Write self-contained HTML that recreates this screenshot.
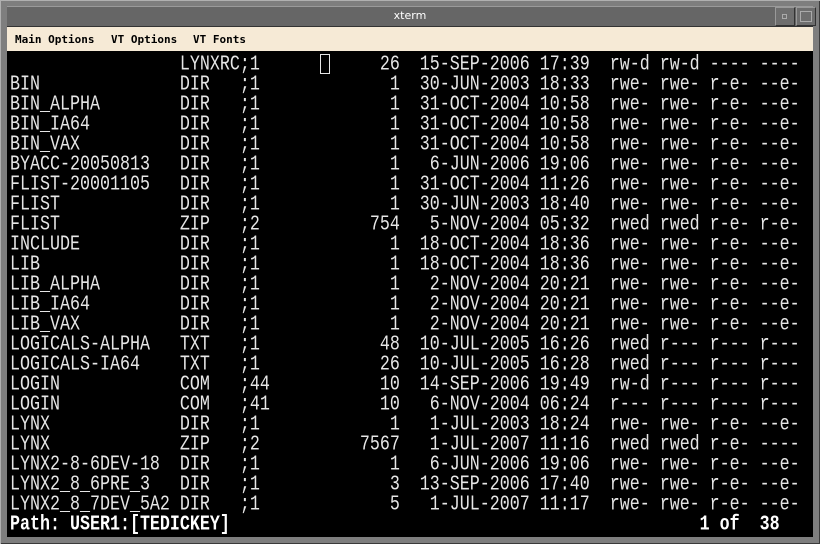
<!DOCTYPE html>
<html><head><style>
html,body{margin:0;padding:0;width:820px;height:544px;overflow:hidden;background:#8a8a8a;}
#frame{position:absolute;left:0;top:0;width:820px;height:544px;background:#7e7e7e;box-shadow:inset 1px 1px 0 #b0b0b0, inset -1px -1px 0 #3a3a3a;}
#title{position:absolute;left:7px;top:6px;width:806px;height:19px;background:#666;border-top:1px solid #9a9a9a;border-bottom:1px solid #333;}
#title span{position:absolute;left:0;right:0;top:2px;text-align:center;color:#fff;font:11px "DejaVu Sans",sans-serif;}
.btn{position:absolute;top:7px;width:18px;height:17px;background:#6e6e6e;border:1px solid #999;border-right-color:#333;border-bottom-color:#333;}
#menu{position:absolute;left:7px;top:27px;width:806px;height:24px;background:#f6ead6;font:bold 11px "DejaVu Sans Mono","Liberation Mono",monospace;color:#000;}
#menu span{position:absolute;top:6px;}
#term{position:absolute;left:7px;top:51px;width:806px;height:486px;background:#000;}
.l{position:absolute;left:10px;height:20px;line-height:20px;white-space:pre;font-family:"Liberation Mono",monospace;font-size:16.67px;color:#e6e6e6;transform:scaleY(1.25);transform-origin:0 14.4px;}
.cur{position:absolute;left:320px;top:54px;width:8px;height:18px;border:1px solid #e6e6e6;}
</style></head><body>
<div id="frame"></div>
<div class="btn" style="left:8px;"><div style="position:absolute;left:4px;top:6px;width:9px;height:3px;border:1px solid #aaa;"></div></div>
<div id="title"><span>xterm</span></div>
<div class="btn" style="left:775px;"><div style="position:absolute;left:6px;top:6px;width:3px;height:3px;border:1px solid #aaa;"></div></div>
<div class="btn" style="left:796px;"><div style="position:absolute;left:3px;top:3px;width:10px;height:9px;border:1px solid #aaa;"></div></div>
<div id="menu"><span style="left:8px">Main Options</span><span style="left:104px">VT Options</span><span style="left:186px">VT Fonts</span></div>
<div id="term"></div>
<div class="cur"></div>
<div class="l" style="top:56.6px">                 LYNXRC;1            26  15-SEP-2006 17:39  rw-d rw-d ---- ----</div>
<div class="l" style="top:76.6px">BIN              DIR   ;1             1  30-JUN-2003 18:33  rwe- rwe- r-e- --e-</div>
<div class="l" style="top:96.6px">BIN_ALPHA        DIR   ;1             1  31-OCT-2004 10:58  rwe- rwe- r-e- --e-</div>
<div class="l" style="top:116.6px">BIN_IA64         DIR   ;1             1  31-OCT-2004 10:58  rwe- rwe- r-e- --e-</div>
<div class="l" style="top:136.6px">BIN_VAX          DIR   ;1             1  31-OCT-2004 10:58  rwe- rwe- r-e- --e-</div>
<div class="l" style="top:156.6px">BYACC-20050813   DIR   ;1             1   6-JUN-2006 19:06  rwe- rwe- r-e- --e-</div>
<div class="l" style="top:176.6px">FLIST-20001105   DIR   ;1             1  31-OCT-2004 11:26  rwe- rwe- r-e- --e-</div>
<div class="l" style="top:196.6px">FLIST            DIR   ;1             1  30-JUN-2003 18:40  rwe- rwe- r-e- --e-</div>
<div class="l" style="top:216.6px">FLIST            ZIP   ;2           754   5-NOV-2004 05:32  rwed rwed r-e- r-e-</div>
<div class="l" style="top:236.6px">INCLUDE          DIR   ;1             1  18-OCT-2004 18:36  rwe- rwe- r-e- --e-</div>
<div class="l" style="top:256.6px">LIB              DIR   ;1             1  18-OCT-2004 18:36  rwe- rwe- r-e- --e-</div>
<div class="l" style="top:276.6px">LIB_ALPHA        DIR   ;1             1   2-NOV-2004 20:21  rwe- rwe- r-e- --e-</div>
<div class="l" style="top:296.6px">LIB_IA64         DIR   ;1             1   2-NOV-2004 20:21  rwe- rwe- r-e- --e-</div>
<div class="l" style="top:316.6px">LIB_VAX          DIR   ;1             1   2-NOV-2004 20:21  rwe- rwe- r-e- --e-</div>
<div class="l" style="top:336.6px">LOGICALS-ALPHA   TXT   ;1            48  10-JUL-2005 16:26  rwed r--- r--- r---</div>
<div class="l" style="top:356.6px">LOGICALS-IA64    TXT   ;1            26  10-JUL-2005 16:28  rwed r--- r--- r---</div>
<div class="l" style="top:376.6px">LOGIN            COM   ;44           10  14-SEP-2006 19:49  rw-d r--- r--- r---</div>
<div class="l" style="top:396.6px">LOGIN            COM   ;41           10   6-NOV-2004 06:24  r--- r--- r--- r---</div>
<div class="l" style="top:416.6px">LYNX             DIR   ;1             1   1-JUL-2003 18:24  rwe- rwe- r-e- --e-</div>
<div class="l" style="top:436.6px">LYNX             ZIP   ;2          7567   1-JUL-2007 11:16  rwed rwed r-e- ----</div>
<div class="l" style="top:456.6px">LYNX2-8-6DEV-18  DIR   ;1             1   6-JUN-2006 19:06  rwe- rwe- r-e- --e-</div>
<div class="l" style="top:476.6px">LYNX2_8_6PRE_3   DIR   ;1             3  13-SEP-2006 17:40  rwe- rwe- r-e- --e-</div>
<div class="l" style="top:496.6px">LYNX2_8_7DEV_5A2 DIR   ;1             5   1-JUL-2007 11:17  rwe- rwe- r-e- --e-</div>
<div class="l" style="top:516.6px;font-weight:bold;color:#fff">Path: USER1:[TEDICKEY]                                               1 of  38</div>
</body></html>
